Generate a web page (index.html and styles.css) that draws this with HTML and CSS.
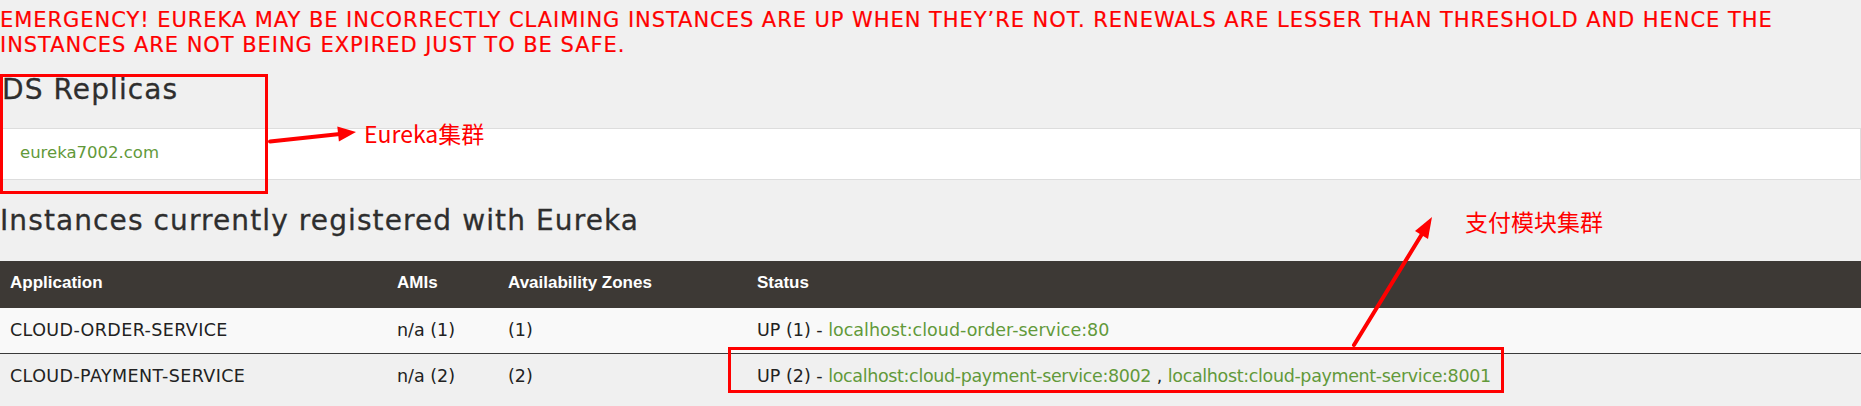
FILE: index.html
```html
<!DOCTYPE html>
<html lang="en">
<head>
<meta charset="utf-8">
<title>Eureka</title>
<link rel="stylesheet" href="styles.css">
</head>
<body>
<div class="page">
  <h4 class="emergency">EMERGENCY! EUREKA MAY BE INCORRECTLY CLAIMING INSTANCES ARE UP WHEN THEY’RE NOT. RENEWALS ARE LESSER THAN THRESHOLD AND HENCE THE INSTANCES ARE NOT BEING EXPIRED JUST TO BE SAFE.</h4>

  <h2 class="section-title title-replicas">DS Replicas</h2>
  <ul class="replicas">
    <li><a href="#">eureka7002.com</a></li>
  </ul>

  <h2 class="section-title title-instances">Instances currently registered with Eureka</h2>
  <table class="instances">
    <colgroup>
      <col class="col-app">
      <col class="col-ami">
      <col class="col-zone">
      <col class="col-status">
    </colgroup>
    <thead>
      <tr>
        <th>Application</th>
        <th>AMIs</th>
        <th>Availability Zones</th>
        <th>Status</th>
      </tr>
    </thead>
    <tbody>
      <tr class="odd">
        <td class="caps">CLOUD-ORDER-SERVICE</td>
        <td>n/a (1)</td>
        <td>(1)</td>
        <td>UP (1) - <a href="#">localhost:cloud-order-service:80</a></td>
      </tr>
      <tr class="even">
        <td class="caps">CLOUD-PAYMENT-SERVICE</td>
        <td>n/a (2)</td>
        <td>(2)</td>
        <td>UP (2) - <a href="#" class="tight">localhost:cloud-payment-service:8002</a> , <a href="#" class="tight">localhost:cloud-payment-service:8001</a></td>
      </tr>
    </tbody>
  </table>

  <svg class="annotations" width="1861" height="406" viewBox="0 0 1861 406" aria-hidden="true">
    <rect x="1.5" y="75.5" width="265" height="117" fill="none" stroke="#ff0000" stroke-width="3"/>
    <rect x="729.5" y="348.5" width="773" height="43" fill="none" stroke="#ff0000" stroke-width="3"/>
    <line x1="270" y1="141.5" x2="340" y2="134" stroke="#ff0000" stroke-width="4" stroke-linecap="round"/>
    <polygon points="356,132 338.9,141.5 337.3,126.5" fill="#ff0000"/>
    <line x1="1354" y1="345" x2="1422" y2="234" stroke="#ff0000" stroke-width="4" stroke-linecap="round"/>
    <polygon points="1432,217 1428,239 1415,231" fill="#ff0000"/>
  </svg>
  <div class="note note-replica">Eureka集群</div>
  <div class="note note-payment">支付模块集群</div>
</div>
</body>
</html>
```
FILE: styles.css
```css
html, body {
  margin: 0;
  padding: 0;
  background: #f0f0f0;
}

.page {
  position: relative;
  width: 1861px;
  height: 406px;
  overflow: hidden;
  font-family: "DejaVu Sans", "Liberation Sans", sans-serif;
  color: #222;
}

.emergency {
  margin: 0;
  padding-top: 8px;
  font-family: "DejaVu Sans", sans-serif;
  font-weight: normal;
  font-size: 21px;
  letter-spacing: 0.95px;
  line-height: 24.5px;
  color: #ff0000;
  -webkit-text-stroke: 0.2px #ff0000;
}

.section-title {
  margin: 0;
  font-family: "DejaVu Sans", sans-serif;
  font-weight: normal;
  font-size: 28px;
  letter-spacing: 1.1px;
  line-height: 32.6px;
  color: #2e2e2e;
  -webkit-text-stroke: 0.3px #2e2e2e;
}

.title-replicas {
  margin-top: 16.5px;
  padding-left: 2px;
}

.replicas {
  list-style: none;
  margin: 22px 0 0;
  padding: 14px 19px 17px;
  background: #fff;
  border: 1px solid #ddd;
}

.replicas li {
  font-size: 16.5px;
  line-height: 19px;
}

a {
  color: #62993a;
  text-decoration: none;
}

.title-instances {
  margin-top: 25px;
}

.instances {
  margin-top: 23.4px;
  width: 100%;
  border-collapse: collapse;
  table-layout: fixed;
}

.col-app { width: 387px; }
.col-ami { width: 111px; }
.col-zone { width: 249px; }

.instances th {
  background: #3d3935;
  color: #fff;
  text-align: left;
  font-family: "Liberation Sans", Arial, sans-serif;
  font-weight: bold;
  font-size: 17px;
  line-height: 20px;
  padding: 12px 10px 15px;
}

.instances td {
  font-size: 17.5px;
  line-height: 20px;
  padding: 12px 10px 13px;
  color: #222;
  white-space: nowrap;
}

.instances td.caps {
  letter-spacing: 0.4px;
}

.instances a.tight {
  letter-spacing: -0.35px;
}

.instances tr.odd td {
  background: #f9f9f9;
  border-bottom: 1px solid #3a3a3a;
}

.instances tr.even td {
  background: #f0f0f0;
}

.annotations {
  position: absolute;
  left: 0;
  top: 0;
  pointer-events: none;
}

.note {
  position: absolute;
  font-family: "Noto Sans CJK SC", sans-serif;
  font-size: 23px;
  line-height: 23px;
  color: #ff0000;
  white-space: nowrap;
}

.note-replica {
  left: 364px;
  top: 122px;
}

.note-payment {
  left: 1465px;
  top: 209.5px;
}
```
